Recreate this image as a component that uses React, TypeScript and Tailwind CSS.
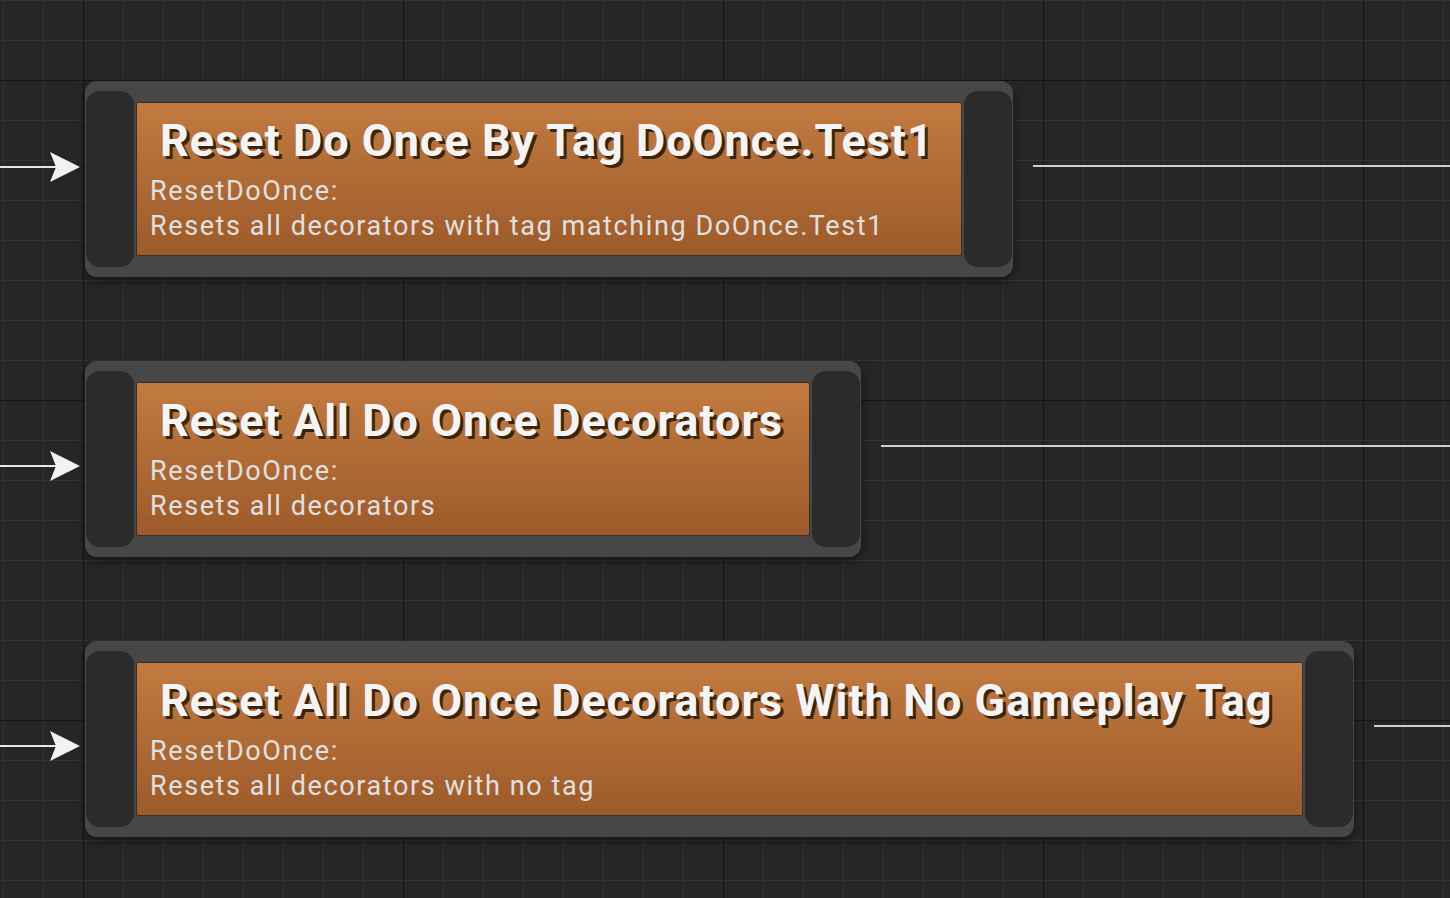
import React from 'react';

type Node = {
  title: string;
  desc: string;
  width: number;
  arrowY: number;
};

const nodes: Node[] = [
  {
    title: 'Reset Do Once By Tag DoOnce.Test1',
    desc: 'Resets all decorators with tag matching DoOnce.Test1',
    width: 826,
    arrowY: 86,
  },
  {
    title: 'Reset All Do Once Decorators',
    desc: 'Resets all decorators',
    width: 674,
    arrowY: 105,
  },
  {
    title: 'Reset All Do Once Decorators With No Gameplay Tag',
    desc: 'Resets all decorators with no tag',
    width: 1167,
    arrowY: 105,
  },
];

const InArrow: React.FC<{ y: number }> = ({ y }) => (
  <svg width="85" height="196" viewBox="0 0 85 196" className="shrink-0">
    <line x1="0" y1={y} x2="56" y2={y} stroke="#e6e6e6" strokeWidth="2" />
    <polygon points={`50,${y - 15} 80,${y} 50,${y + 15} 56,${y}`} fill="#f2f2f2" />
  </svg>
);

const TaskNode: React.FC<{ node: Node }> = ({ node }) => (
  <div className="flex items-center gap-[2px] h-[196px] px-[1px] py-[10px] rounded-[12px] bg-[#474747] shadow-[0_4px_10px_rgba(0,0,0,0.45)] shrink-0">
    <div className="w-[48px] h-full rounded-[14px] bg-[#2b2b2b]" />
    <div
      className="h-[154px] border border-[#3a3029] rounded-[2px] bg-gradient-to-b from-[#c27a3f] to-[#9d5b2b] pl-[13px] pt-[14px] whitespace-nowrap"
      style={{ width: node.width }}
    >
      <div className="pl-[10px] text-[45px] leading-[48px] font-bold tracking-[1px] text-[#f4f4f4] [font-family:Roboto,'Liberation_Sans',sans-serif] [text-shadow:3px_3px_0_#3a2410]">
        {node.title}
      </div>
      <div className="mt-[9px] text-[27px] leading-[35px] tracking-[1.6px] text-[#e0e0e0] [font-family:Roboto,'Liberation_Sans',sans-serif]">
        <div>ResetDoOnce:</div>
        <div>{node.desc}</div>
      </div>
    </div>
    <div className="w-[48px] h-full rounded-[14px] bg-[#2b2b2b]" />
  </div>
);

const App: React.FC = () => {
  return (
    <div className="w-[1450px] h-[898px] overflow-hidden bg-[#262626] [background-image:linear-gradient(to_right,#151515_1px,transparent_1px),linear-gradient(to_bottom,#151515_1px,transparent_1px),linear-gradient(to_right,#333333_1px,transparent_1px),linear-gradient(to_bottom,#333333_1px,transparent_1px)] [background-size:320px_320px,320px_320px,40px_40px,40px_40px] [background-position:83px_80px,83px_80px,3px_0px,3px_0px]">
      <div className="flex flex-col gap-[84px] pt-[81px]">
        {nodes.map((n, i) => (
          <div key={i} className="flex items-start">
            <InArrow y={n.arrowY} />
            <TaskNode node={n} />
            <div className="flex-1 pl-[20px] pt-[84px]">
              <div className="h-[2px] bg-[#cfcfcf]" />
            </div>
          </div>
        ))}
      </div>
    </div>
  );
};

export default App;
